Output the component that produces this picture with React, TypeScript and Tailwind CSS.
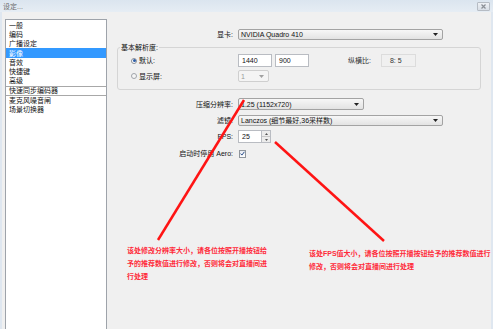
const FONT = "[font-family:'Liberation_Sans','Noto_Sans_CJK_SC',sans-serif]";

function Arrow() {
  return (
    <svg width="5" height="3" viewBox="0 0 5 3" className="shrink-0">
      <path d="M0 0h5L2.5 3z" fill="#222" />
    </svg>
  );
}

function Select({ className, text, disabled }: { className: string; text: string; disabled?: boolean }) {
  return (
    <div
      className={`${className} flex items-center justify-between rounded-[2px] border pl-[2px] pr-[4px] text-[7px] leading-none ${
        disabled
          ? "border-[#cfcfcf] bg-[#f4f4f4] text-[#9a9a9a]"
          : "border-[#a3a3a3] bg-linear-to-b from-[#f7f7f7] to-[#e3e3e3] text-[#111]"
      }`}
    >
      <span className="whitespace-nowrap">{text}</span>
      {disabled ? (
        <svg width="5" height="3" viewBox="0 0 5 3">
          <path d="M0 0h5L2.5 3z" fill="#a0a0a0" />
        </svg>
      ) : (
        <Arrow />
      )}
    </div>
  );
}

function Input({ className, text }: { className: string; text: string }) {
  return (
    <div className={`${className} flex items-center border border-[#b9bcc2] bg-white pl-[3px] text-[7px] leading-none text-[#111]`}>
      {text}
    </div>
  );
}

function Label({ text }: { text: string }) {
  return <div className="w-[121px] shrink-0 pr-[5px] text-right text-[7px] leading-none text-[#111] whitespace-nowrap">{text}</div>;
}

export default function App() {
  const items = ["一般", "编码", "广播设定", "影像", "音效", "快捷键", "高级"];
  return (
    <div className={`relative h-[329px] w-[493px] overflow-hidden bg-[#dfe7f0] ${FONT}`}>
      {/* title bar */}
      <div className="flex h-[12px] items-center justify-between bg-linear-to-b from-[#dbe5ef] to-[#e6edf4] pl-[3px] pr-[3px]">
        <span className="text-[7px] leading-none text-[#6a6a6a]">设定...</span>
        <div className="flex h-[9px] w-[13px] items-center justify-center rounded-[1px] border border-[#b6bcc4] bg-linear-to-b from-[#eef1f5] to-[#d8dee6]">
          <svg width="5" height="5" viewBox="0 0 5 5">
            <path d="M0.5 0.5l4 4M4.5 0.5l-4 4" stroke="#8a8f96" strokeWidth="1.2" />
          </svg>
        </div>
      </div>

      <div className="mx-[2px] flex h-[317px] bg-[#f0f0f0]">
        {/* list */}
        <div className="ml-[3px] mt-[7px] h-[320px] w-[102px] shrink-0 border border-[#9ea3aa] bg-white pt-[0.5px]">
          {items.map((t) => (
            <div
              key={t}
              className={`flex h-[9.3px] items-center pl-[3px] text-[7px] leading-none ${
                t === "影像" ? "bg-[#3399ff] text-white" : "text-[#111]"
              }`}
            >
              {t}
            </div>
          ))}
          <div className="flex h-[10px] items-center border-y border-[#a8a8a8] pl-[3px] text-[7px] leading-none text-[#111]">快速同步编码器</div>
          <div className="flex h-[9.3px] items-center pl-[3px] text-[7px] leading-none text-[#111]">麦克风噪音闸</div>
          <div className="flex h-[9.3px] items-center pl-[3px] text-[7px] leading-none text-[#111]">场景切换器</div>
        </div>

        {/* settings */}
        <div className="ml-[10px] flex w-[364px] flex-col">
          <div className="mt-[17px] flex h-[11px] items-center">
            <Label text="显卡:" />
            <Select className="h-[11px] w-[205px]" text="NVIDIA Quadro 410" />
          </div>

          <div className="mt-[7px] flex h-[43px] flex-col rounded-[3px] border border-[#d5d5d5]">
            <div className="-mt-[5px] ml-[2px] h-[9px] w-fit bg-[#f0f0f0] px-[1px] text-[7px] leading-[9px] text-[#111]">基本解析度:</div>
            <div className="mt-[2px] flex h-[13px] items-center">
              <div className="flex w-[120px] shrink-0 items-center pl-[13px]">
                <div className="flex h-[6px] w-[6px] items-center justify-center rounded-full border border-[#8a8f96] bg-white">
                  <div className="h-[3px] w-[3px] rounded-full bg-[#2d5ea8]" />
                </div>
                <span className="ml-[2px] text-[7px] leading-none text-[#111]">默认:</span>
              </div>
              <Input className="h-[13px] w-[34px]" text="1440" />
              <Input className="ml-[3px] h-[13px] w-[34px]" text="900" />
              <span className="ml-[39px] text-[7px] leading-none text-[#333]">纵横比:</span>
              <div className="ml-[10px] flex h-[13px] w-[35px] items-center border border-[#dcdcdc] pl-[8px] text-[7px] leading-none text-[#333]">8: 5</div>
            </div>
            <div className="mt-[3px] flex h-[12px] items-center">
              <div className="flex w-[120px] shrink-0 items-center pl-[13px]">
                <div className="h-[6px] w-[6px] rounded-full border border-[#a0a4aa] bg-[#f6f6f6]" />
                <span className="ml-[2px] text-[7px] leading-none text-[#111]">显示屏:</span>
              </div>
              <Select className="h-[12px] w-[31px]" text="1" disabled />
            </div>
          </div>

          <div className="mt-[8px] flex h-[12px] items-center">
            <Label text="压缩分辨率:" />
            <Select className="h-[12px] w-[126px]" text="1.25  (1152x720)" />
          </div>
          <div className="mt-[5px] flex h-[11px] items-center">
            <Label text="滤镜:" />
            <Select className="h-[11px] w-[205px]" text="Lanczos (细节最好,36采样数)" />
          </div>
          <div className="mt-[4px] flex h-[13px] items-center">
            <Label text="FPS:" />
            <Input className="h-[13px] w-[24px]" text="25" />
            <div className="flex h-[13px] w-[9px] flex-col border border-l-0 border-[#b9bcc2]">
              <div className="flex flex-1 items-center justify-center border-b border-[#c8c8c8] bg-[#ececec]">
                <svg width="3" height="2" viewBox="0 0 3 2"><path d="M0 2h3L1.5 0z" fill="#555" /></svg>
              </div>
              <div className="flex flex-1 items-center justify-center bg-[#ececec]">
                <svg width="3" height="2" viewBox="0 0 3 2"><path d="M0 0h3L1.5 2z" fill="#555" /></svg>
              </div>
            </div>
          </div>
          <div className="mt-[6px] flex h-[9px] items-center">
            <Label text="启动时停用 Aero:" />
            <div className="ml-[1px] flex h-[8px] w-[7px] items-center justify-center border border-[#8f959c] bg-linear-to-b from-[#e8ecf2] to-[#ffffff]">
              <svg width="5" height="5" viewBox="0 0 5 5">
                <path d="M0.6 2.6l1.3 1.5L4.4 0.8" stroke="#2c4f8a" strokeWidth="1" fill="none" />
              </svg>
            </div>
          </div>

          {/* annotations */}
          <div className="mt-[86px] flex items-start">
            <div className="ml-[10px] w-[182px] shrink-0 text-[7px] font-bold leading-[13px] text-[#ff2b3a] whitespace-nowrap">
              该处修改分辨率大小，请各位按照开播按钮给
              <br />
              予的推荐数值进行修改，否则将会对直播间进
              <br />
              行处理
            </div>
            <div className="mt-[3px] text-[7px] font-bold leading-[13px] text-[#ff2b3a] whitespace-nowrap">
              该处FPS值大小，请各位按照开播按钮给予的推荐数值进行
              <br />
              修改，否则将会对直播间进行处理
            </div>
          </div>
        </div>
      </div>

      {/* red arrows drawn over the screenshot */}
      <svg className="pointer-events-none absolute left-0 top-0" width="493" height="329">
        <line x1="244" y1="100" x2="158" y2="240" stroke="#ff1414" strokeWidth="2.5" />
        <line x1="275" y1="142" x2="384" y2="241" stroke="#ff1414" strokeWidth="2.5" />
      </svg>
    </div>
  );
}
